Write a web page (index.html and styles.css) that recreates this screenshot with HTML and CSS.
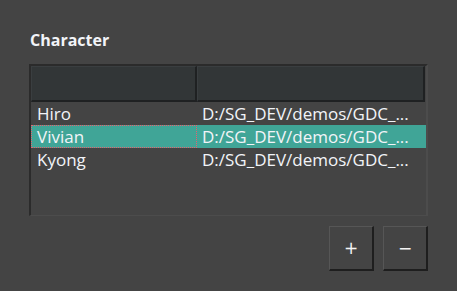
FILE: index.html
```html
<!DOCTYPE html>
<html>
  <head>
    <meta charset="UTF-8" />
    <title>Character</title>
    <link rel="stylesheet" href="styles.css">
  </head>
  <body>
    <div class="panel">
      <h2 class="title">Character</h2>

      <div class="table">
        <div class="head">
          <div class="head-cell"></div>
          <div class="head-cell"></div>
        </div>
        <div class="row">
          <div class="cell">Hiro</div>
          <div class="cell">D:/SG_DEV/demos/GDC_...</div>
        </div>
        <div class="row selected">
          <div class="cell focus">Vivian</div>
          <div class="cell">D:/SG_DEV/demos/GDC_...</div>
        </div>
        <div class="row">
          <div class="cell">Kyong</div>
          <div class="cell">D:/SG_DEV/demos/GDC_...</div>
        </div>
      </div>

      <div class="actions">
        <button class="btn" type="button">+</button>
        <button class="btn" type="button">&minus;</button>
      </div>
    </div>
  </body>
</html>
```

FILE: styles.css
```css
html,
body {
  margin: 0;
  background: #444444;
}
body {
  font-family: "Open Sans", "Noto Sans", sans-serif;
  color: #f2f4f8;
}
.panel {
  width: 399px;
  padding: 27px 0 0 29px;
}
.title {
  margin: 0 0 0 1px;
  font-size: 16px;
  font-weight: 700;
  line-height: 26px;
  height: 37px;
}
.table {
  height: 152px;
  box-sizing: border-box;
  border-top: 2px solid #2b2b2b;
  border-left: 2px solid #2b2b2b;
  border-right: 2px solid #4c4c4c;
  border-bottom: 1px solid #4c4c4c;
  background: #444444;
}
.head {
  display: grid;
  grid-template-columns: 166px 228px;
  height: 36px;
}
.head-cell {
  box-sizing: border-box;
  background: #323637;
  border-top: 1px solid #3a3e40;
  border-left: 1px solid #3a3e40;
  border-right: 2px solid #1f2122;
  border-bottom: 2px solid #1f2122;
}
.row {
  display: grid;
  grid-template-columns: 166px 228px;
  height: 23px;
  font-size: 17px;
  line-height: 24px;
}
.row:first-of-type {
  margin-top: 2px;
}
.cell {
  box-sizing: border-box;
  padding-left: 6px;
  white-space: nowrap;
  overflow: hidden;
}
.cell + .cell {
  padding-left: 5px;
}
.selected {
  background: #40a597;
}
.focus {
  border: 1px dotted #e8606e;
  padding-left: 5px;
  line-height: 22px;
}
.actions {
  display: flex;
  justify-content: flex-end;
  gap: 9px;
  margin-top: 10px;
}
.btn {
  width: 45px;
  height: 45px;
  box-sizing: border-box;
  background: #444444;
  border-top: 1px solid #565656;
  border-left: 1px solid #565656;
  border-right: 2px solid #1e1e1e;
  border-bottom: 2px solid #1e1e1e;
  color: #f4f4f4;
  font-family: "DejaVu Sans", sans-serif;
  font-size: 17px;
  padding: 0;
}
```
